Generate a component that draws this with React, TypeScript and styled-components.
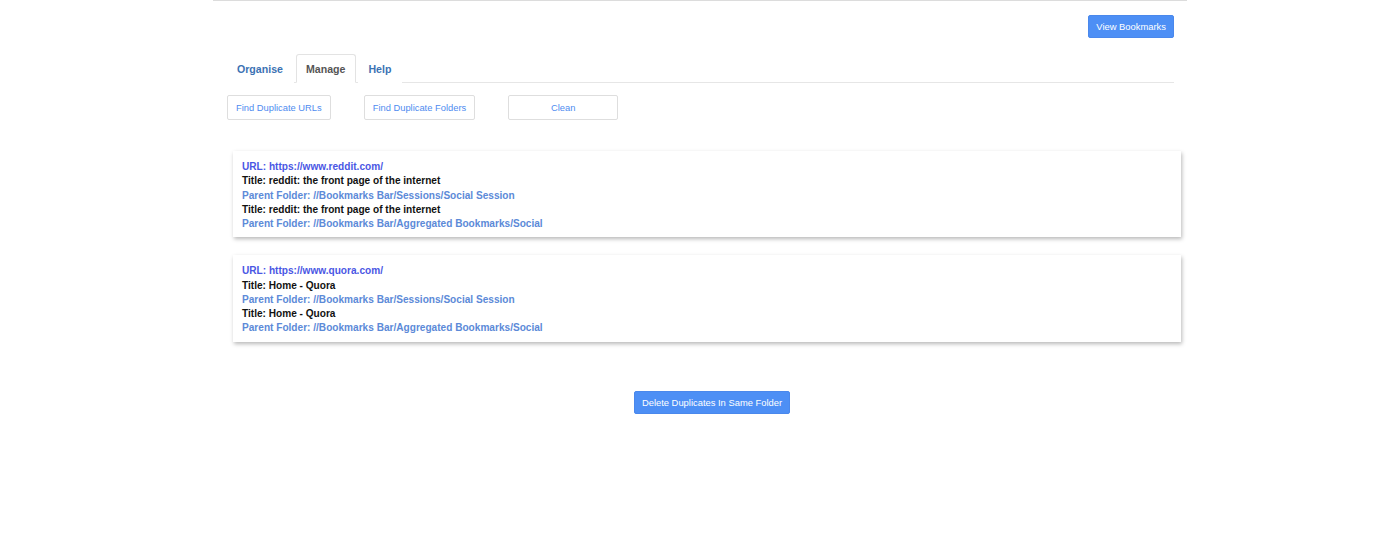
import * as React from 'react';
import styled, { createGlobalStyle } from 'styled-components';

type Duplicate = {
    url: string;
    entries: { title: string; folder: string }[];
};

const duplicates: Duplicate[] = [
    {
        url: 'https://www.reddit.com/',
        entries: [
            { title: 'reddit: the front page of the internet', folder: '//Bookmarks Bar/Sessions/Social Session' },
            { title: 'reddit: the front page of the internet', folder: '//Bookmarks Bar/Aggregated Bookmarks/Social' },
        ],
    },
    {
        url: 'https://www.quora.com/',
        entries: [
            { title: 'Home - Quora', folder: '//Bookmarks Bar/Sessions/Social Session' },
            { title: 'Home - Quora', folder: '//Bookmarks Bar/Aggregated Bookmarks/Social' },
        ],
    },
];

const tabs = ['Organise', 'Manage', 'Help'];

export default function App() {
    const [tab, setTab] = React.useState<string>('Manage');
    return (
        <>
            <GlobalStyle />
            <Page>
                <TopBar>
                    <SolidButton>View Bookmarks</SolidButton>
                </TopBar>
                <TabList>
                    {tabs.map((t) => (
                        <Tab key={t} $active={tab === t} onClick={() => setTab(t)}>
                            {t}
                        </Tab>
                    ))}
                </TabList>
                <ToolRow>
                    <OutlineButton>Find Duplicate URLs</OutlineButton>
                    <OutlineButton>Find Duplicate Folders</OutlineButton>
                    <OutlineButton $wide>Clean</OutlineButton>
                </ToolRow>
                <CardList>
                    {duplicates.map((d) => (
                        <Card key={d.url}>
                            <UrlLine>URL: {d.url}</UrlLine>
                            {d.entries.map((e, i) => (
                                <React.Fragment key={i}>
                                    <TitleLine>Title: {e.title}</TitleLine>
                                    <FolderLine>Parent Folder: {e.folder}</FolderLine>
                                </React.Fragment>
                            ))}
                        </Card>
                    ))}
                </CardList>
                <BottomRow>
                    <SolidButton>Delete Duplicates In Same Folder</SolidButton>
                </BottomRow>
            </Page>
        </>
    );
}

const GlobalStyle = createGlobalStyle`
    body{
        margin: 0;
        background: #ffffff;
        font-family: "Liberation Sans", Arial, sans-serif;
    }
`
const Page = styled.div`
    width: 974px;
    margin: 0 auto;
    padding: 0 13px 0 14px;
    box-sizing: border-box;
    border-top: 1px solid #dcdcdc;
`
const TopBar = styled.div`
    display: flex;
    justify-content: flex-end;
    padding-top: 14px;
`
const SolidButton = styled.button`
    height: 23px;
    padding: 0 7px;
    font-family: inherit;
    font-size: 9.4px;
    color: #ffffff;
    background-color: #4d8ff5;
    border: 1px solid #4a88ec;
    border-radius: 2px;
    cursor: pointer;
`
const TabList = styled.div`
    display: flex;
    margin-top: 16px;
    height: 28px;
    border-bottom: 1px solid #e6e6e6;
`
const Tab = styled.div<{ $active?: boolean }>`
    display: flex;
    align-items: center;
    padding: 0 10px 0 9px;
    margin-right: 2px;
    margin-bottom: -1px;
    font-size: 10.6px;
    font-weight: bold;
    color: ${(p) => (p.$active ? '#555555' : '#3b72b3')};
    background: #ffffff;
    border: 1px solid ${(p) => (p.$active ? '#e3e3e3' : 'transparent')};
    border-bottom-color: ${(p) => (p.$active ? '#ffffff' : 'transparent')};
    border-radius: 3px 3px 0 0;
    cursor: pointer;
`
const ToolRow = styled.div`
    display: flex;
    gap: 33px;
    margin-top: 12px;
`
const OutlineButton = styled.button<{ $wide?: boolean }>`
    height: 25px;
    padding: 0 8px;
    min-width: ${(p) => (p.$wide ? '110px' : '0')};
    font-family: inherit;
    font-size: 9.35px;
    color: #4f8cf0;
    background: #ffffff;
    border: 1px solid #dedede;
    border-radius: 2px;
    cursor: pointer;
`
const CardList = styled.div`
    display: flex;
    flex-direction: column;
    gap: 18px;
    margin: 31px -7px 0 6px;
`
const Card = styled.div`
    padding: 9px 9px 6px;
    background: #ffffff;
    box-shadow: 1px 2px 4px rgba(0, 0, 0, 0.28);
    font-size: 10.1px;
    font-weight: bold;
    line-height: 14.25px;
`
const UrlLine = styled.div`
    color: #4a57e4;
`
const TitleLine = styled.div`
    color: #111111;
`
const FolderLine = styled.div`
    color: #5c8ad8;
`
const BottomRow = styled.div`
    display: flex;
    justify-content: center;
    padding-left: 23px;
    margin-top: 49px;
`
